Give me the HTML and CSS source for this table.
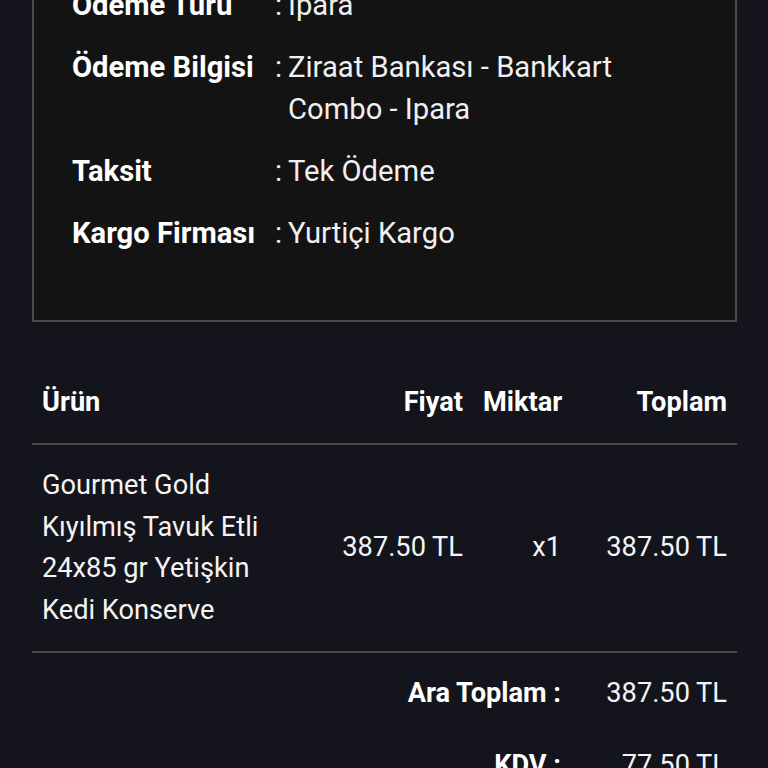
FILE: index.html
```html
<!DOCTYPE html>
<html lang="tr">
<head>
<meta charset="utf-8">
<title>Sipariş Detayı</title>
<link rel="stylesheet" href="styles.css">
</head>
<body>
<main class="page">
  <section class="info-box">
    <div class="info-row">
      <span class="info-label">Ödeme Türü</span>
      <span class="info-colon">:</span>
      <span class="info-value">Ipara</span>
    </div>
    <div class="info-row">
      <span class="info-label">Ödeme Bilgisi</span>
      <span class="info-colon">:</span>
      <span class="info-value">Ziraat Bankası - Bankkart Combo - Ipara</span>
    </div>
    <div class="info-row">
      <span class="info-label">Taksit</span>
      <span class="info-colon">:</span>
      <span class="info-value">Tek Ödeme</span>
    </div>
    <div class="info-row">
      <span class="info-label">Kargo Firması</span>
      <span class="info-colon">:</span>
      <span class="info-value">Yurtiçi Kargo</span>
    </div>
  </section>

  <table class="items">
    <colgroup>
      <col class="col-product">
      <col class="col-price">
      <col class="col-qty">
      <col class="col-total">
    </colgroup>
    <thead>
      <tr>
        <th class="left">Ürün</th>
        <th>Fiyat</th>
        <th>Miktar</th>
        <th>Toplam</th>
      </tr>
    </thead>
    <tbody>
      <tr>
        <td class="left">Gourmet Gold Kıyılmış Tavuk Etli 24x85 gr Yetişkin Kedi Konserve</td>
        <td>387.50 TL</td>
        <td>x1</td>
        <td>387.50 TL</td>
      </tr>
    </tbody>
    <tfoot>
      <tr>
        <th colspan="3">Ara Toplam :</th>
        <td>387.50 TL</td>
      </tr>
      <tr>
        <th colspan="3">KDV :</th>
        <td>77.50 TL</td>
      </tr>
    </tfoot>
  </table>
</main>
</body>
</html>
```

FILE: styles.css
```css
* {
  box-sizing: border-box;
}

html, body {
  margin: 0;
  padding: 0;
  background: #14151c;
}

body {
  font-family: Roboto, "Noto Sans", "Liberation Sans", sans-serif;
  font-size: 27.2px;
  line-height: 41.5px;
  color: #f4f4f4;
}

.page {
  margin-top: -55px;
  padding: 0 31px 0 32px;
}

.info-box {
  background: #131313;
  border: 2px solid #4a4a4a;
  padding: 38px 50px 45px 38px;
  font-size: 29.2px;
}

.info-row {
  display: grid;
  grid-template-columns: 203px 13px 1fr;
  margin-bottom: 20.5px;
}

.info-label {
  font-weight: 700;
  color: #ffffff;
}

.info-colon,
.info-value {
  color: #f0f0f0;
}

.items {
  width: 100%;
  margin-top: 40px;
  border-collapse: collapse;
  table-layout: fixed;
}

.col-product { width: 260px; }
.col-price { width: 181px; }
.col-qty { width: 98px; }
.col-total { width: 166px; }

.items th,
.items td {
  padding: 20px 10px;
  text-align: right;
  vertical-align: middle;
  font-weight: 400;
}

.items th {
  font-weight: 700;
  color: #ffffff;
}

.items .left {
  text-align: left;
}

.items thead tr,
.items tbody tr {
  border-bottom: 2px solid #4a4a4a;
}

.items tfoot th,
.items tfoot td {
  padding: 19.5px 10px 11px 10px;
}
```
